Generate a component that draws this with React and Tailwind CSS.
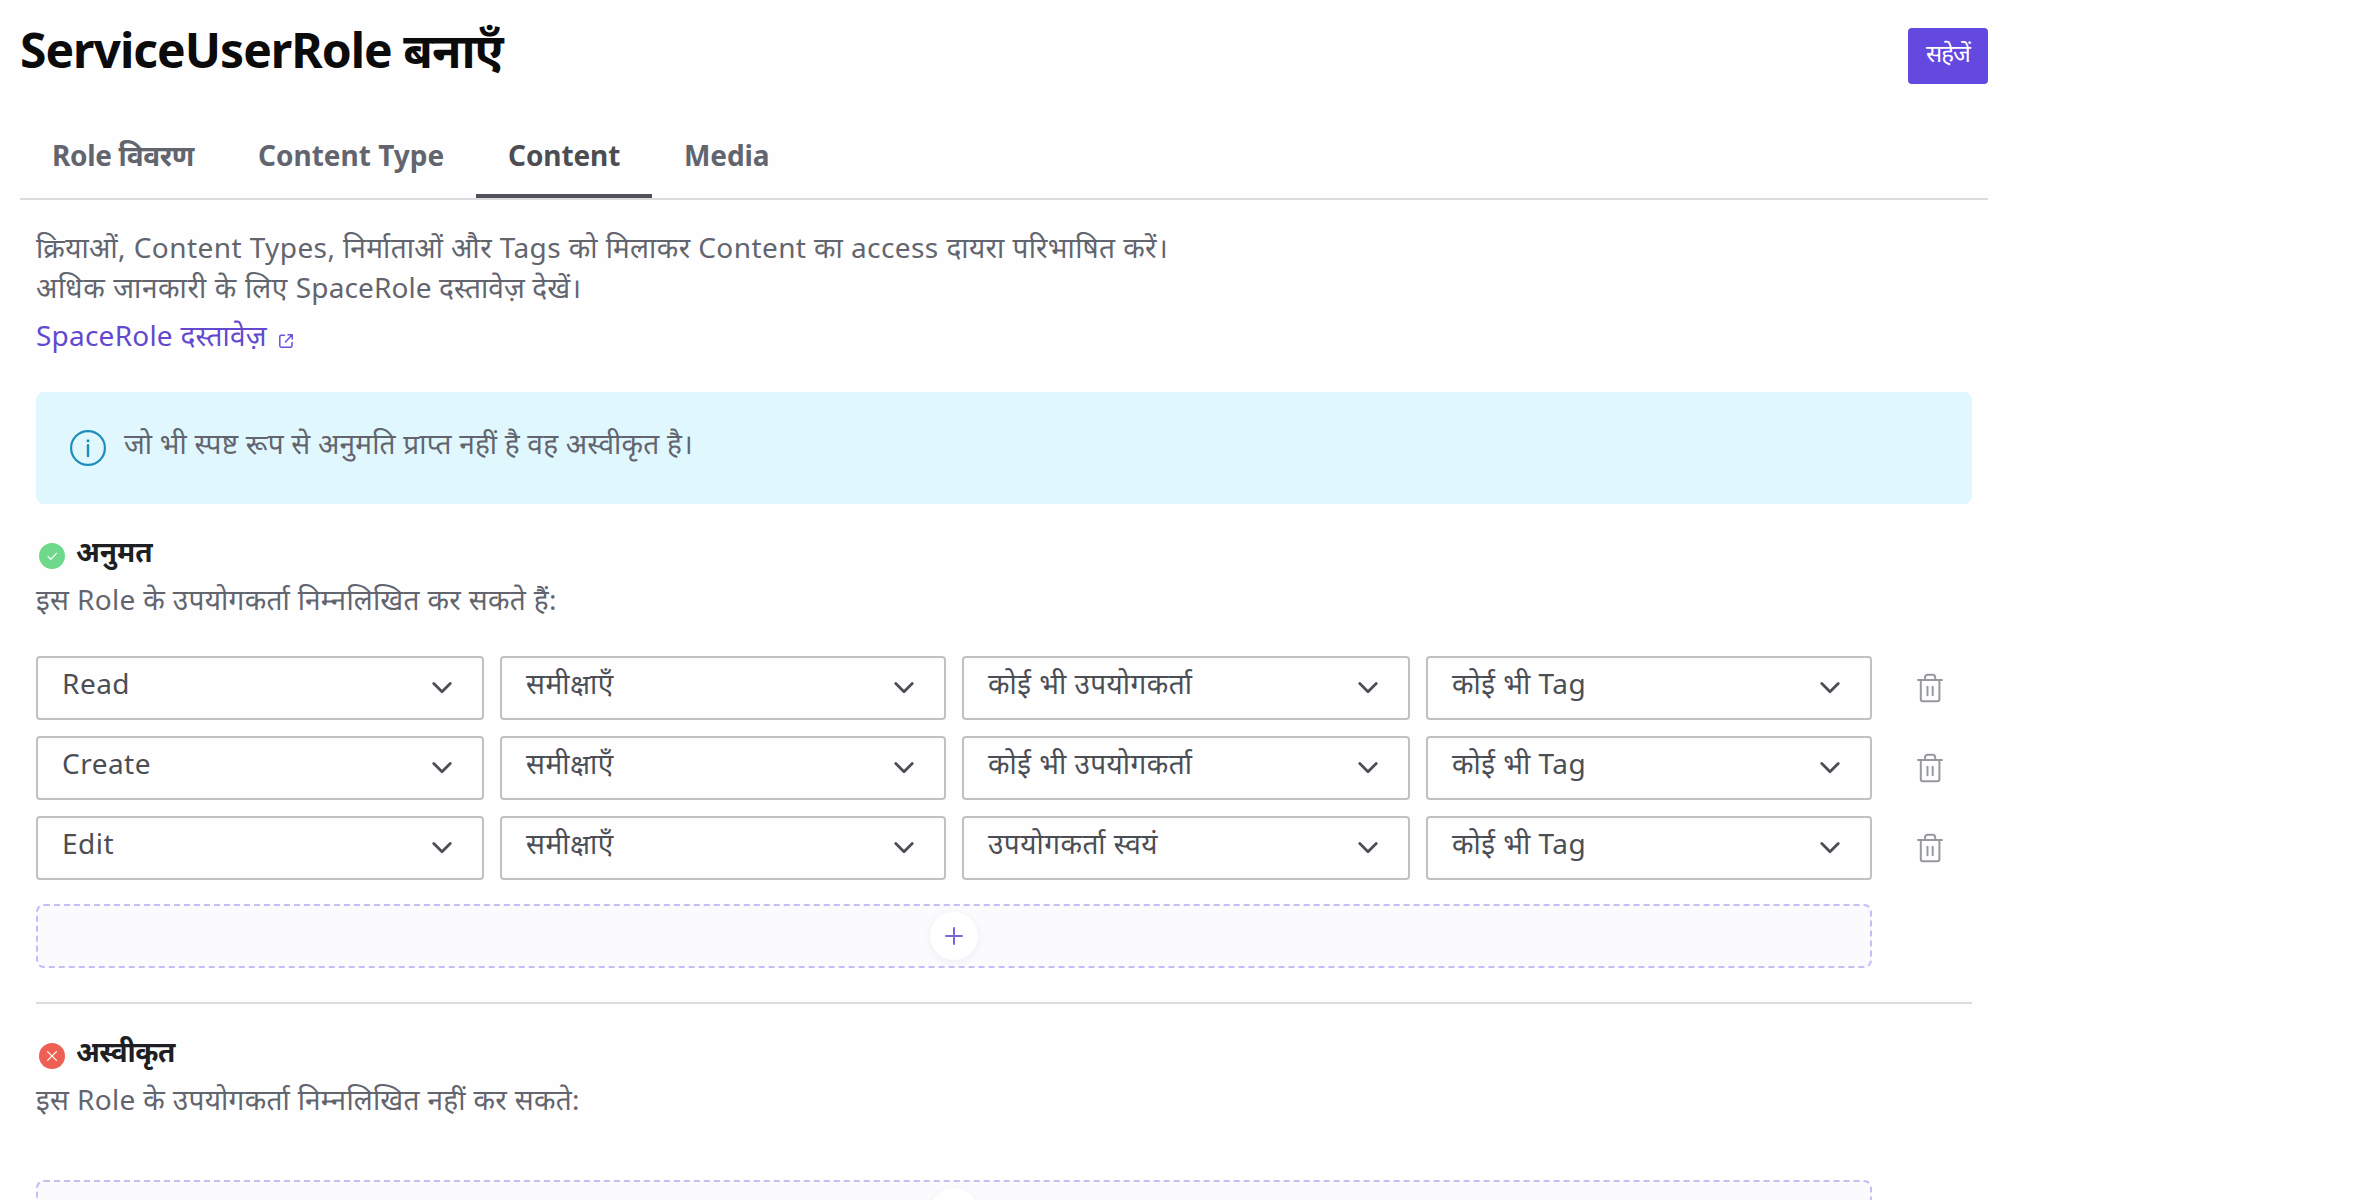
import React from "react";

const CheckBadge = () => (
  <svg width="26" height="26" viewBox="0 0 26 26" fill="none">
    <circle cx="13" cy="13" r="13" fill="#6fd98b" />
    <path d="M9 13.6l2.8 2.8 5.6-6" stroke="#fff" strokeWidth="1.2" strokeLinecap="round" strokeLinejoin="round" />
  </svg>
);

const CrossBadge = () => (
  <svg width="26" height="26" viewBox="0 0 26 26" fill="none">
    <circle cx="13" cy="13" r="13" fill="#ee5f54" />
    <path d="M8.6 8.6l8.8 8.8M17.4 8.6l-8.8 8.8" stroke="#fff" strokeWidth="1.3" strokeLinecap="round" />
  </svg>
);

const Chevron = () => (
  <svg className="shrink-0" width="20" height="12" viewBox="0 0 20 12" fill="none">
    <path d="M1.8 1.6L10 9.8l8.2-8.2" stroke="#4b4e54" strokeWidth="2.8" strokeLinecap="round" strokeLinejoin="round" />
  </svg>
);

const Trash = () => (
  <svg width="26" height="30" viewBox="0 0 26 30" fill="none" stroke="#96999e" strokeWidth="2" strokeLinecap="round" strokeLinejoin="round">
    <path d="M1 7h24M3.8 7v19.2a2 2 0 0 0 2 2h14.6a2 2 0 0 0 2-2V7M8 7V4.6a2.8 2.8 0 0 1 2.8-2.8h4.6a2.8 2.8 0 0 1 2.8 2.8V7M10.5 13.7v8.6M15.7 13.7v8.6" />
  </svg>
);

const ExternalLink = () => (
  <svg width="14" height="14" viewBox="0 0 14 14" fill="none" stroke="#6a50dc" strokeWidth="1.5" strokeLinecap="round" strokeLinejoin="round">
    <path d="M5.5 1.2H2.2A1.4 1.4 0 0 0 .8 2.6v9.2a1.4 1.4 0 0 0 1.4 1.4h9.4a1.4 1.4 0 0 0 1.4-1.4V8.4M9 .8h4.3v4.3M13 1.1L6.4 8" />
  </svg>
);

const InfoIcon = () => (
  <svg className="shrink-0" width="36" height="36" viewBox="0 0 36 36" fill="none">
    <circle cx="18" cy="18" r="16.9" stroke="#1f8dba" strokeWidth="2.2" />
    <path d="M18 15.2V26" stroke="#1f8dba" strokeWidth="2.4" strokeLinecap="round" />
    <circle cx="18" cy="10.8" r="1.5" fill="#1f8dba" />
  </svg>
);

const tabs = [
  { label: "Role विवरण", size: "w-[206px] tracking-[-0.35px]" },
  { label: "Content Type", size: "w-[250px]" },
  { label: "Content", size: "w-[176px] tracking-[-0.1px]", active: true },
  { label: "Media", size: "w-[148px] tracking-[-0.1px]" },
];

const rules = [
  ["Read", "समीक्षाएँ", "कोई भी उपयोगकर्ता", "कोई भी Tag"],
  ["Create", "समीक्षाएँ", "कोई भी उपयोगकर्ता", "कोई भी Tag"],
  ["Edit", "समीक्षाएँ", "उपयोगकर्ता स्वयं", "कोई भी Tag"],
];

function Select({ value }) {
  return (
    <button className="flex h-16 items-center justify-between rounded-[4px] border-2 border-[#bfc1c4] pr-[30px] pl-6 text-left text-[#4b4e54]">
      <span className="pb-2.5 leading-10 tracking-[0.48px] whitespace-nowrap">{value}</span>
      <Chevron />
    </button>
  );
}

function AddRow() {
  return (
    <button className="flex h-16 w-[1836px] items-center justify-center rounded-lg border-2 border-dashed border-[#c6bdf5] bg-[#fbfbfe]">
      <span className="flex size-12 items-center justify-center rounded-full bg-white shadow-[0_2px_8px_rgba(30,30,80,0.06)]">
        <svg width="18" height="18" viewBox="0 0 18 18" fill="none">
          <path d="M9 1v16M1 9h16" stroke="#7b68de" strokeWidth="2" strokeLinecap="round" />
        </svg>
      </span>
    </button>
  );
}

function SectionHead({ icon, title, text, titleClass }) {
  return (
    <>
      <div className="flex h-10 items-center pl-[3px]">
        <span className="mt-2.5">{icon}</span>
        <h2 className={`ml-[11px] leading-10 font-bold text-[#1d1f23] ${titleClass}`}>{title}</h2>
      </div>
      <p className="mt-2 leading-10 tracking-[0.34px]">{text}</p>
    </>
  );
}

export default function App() {
  return (
    <div className="h-[1200px] w-[2356px] overflow-hidden bg-[#fefefe] font-['Noto_Sans',sans-serif] text-[28px] text-[#62656e]">
      <div className="ml-5 w-[1968px]">
        <header className="flex h-[132px] items-start justify-between">
          <h1 className="mt-[17px] text-[48px] leading-[66px] font-bold tracking-[-1px] text-[#0b0b0c]">ServiceUserRole बनाएँ</h1>
          <button className="mt-7 h-14 w-20 rounded-[4px] bg-[#6349e0] pb-1.5 text-[24px] leading-[48px] tracking-[-1px] text-white">सहेजें</button>
        </header>
        <nav className="flex h-[68px] border-b-2 border-[#dcdcde]">
          {tabs.map((t) => (
            <button
              key={t.label}
              className={`${t.size} border-b-4 px-8 pb-4 text-left leading-10 font-bold whitespace-nowrap ${t.active ? "border-[#50515b] text-[#4b4d53]" : "border-transparent"}`}
            >
              {t.label}
            </button>
          ))}
        </nav>
        <main className="mx-4">
          <p className="mt-[27px] leading-10">
            <span className="tracking-[0.42px]">क्रियाओं, Content Types, निर्माताओं और Tags को मिलाकर Content का access दायरा परिभाषित करें।</span>
            <br />
            <span className="tracking-[0.65px]">अधिक जानकारी के लिए </span>
            <span className="tracking-[0.1px]">SpaceRole दस्तावेज़ देखें।</span>
          </p>
          <a className="mt-2 flex h-10 items-center text-[#6349d0]">
            <span className="leading-10 tracking-[0.22px]">SpaceRole दस्तावेज़</span>
            <span className="mt-3 ml-3"><ExternalLink /></span>
          </a>
          <div className="mt-[37px] flex h-28 items-center rounded-lg bg-[#e0f7fe] pl-[34px]">
            <InfoIcon />
            <span className="ml-[18px] pb-2.5 leading-10 tracking-[0.22px]">जो भी स्पष्ट रूप से अनुमति प्राप्त नहीं है वह अस्वीकृत है।</span>
          </div>
          <section className="mt-[27px] h-[473px] border-b-2 border-[#dcdcde]">
            <SectionHead
              icon={<CheckBadge />}
              title="अनुमत"
              titleClass="tracking-normal"
              text="इस Role के उपयोगकर्ता निम्नलिखित कर सकते हैं:"
            />
            <div className="mt-[37px] mb-6 flex flex-col gap-4">
              {rules.map((r) => (
                <div key={r[0]} className="flex items-center">
                  <div className="grid grid-cols-[448px_446px_448px_446px] gap-4">
                    {r.map((v) => (
                      <Select key={v} value={v} />
                    ))}
                  </div>
                  <button className="ml-[45px]"><Trash /></button>
                </div>
              ))}
            </div>
            <AddRow />
          </section>
          <section className="mt-[27px]">
            <SectionHead
              icon={<CrossBadge />}
              title="अस्वीकृत"
              titleClass="tracking-[-0.5px]"
              text="इस Role के उपयोगकर्ता निम्नलिखित नहीं कर सकते:"
            />
            <div className="mt-[61px]">
              <AddRow />
            </div>
          </section>
        </main>
      </div>
    </div>
  );
}
